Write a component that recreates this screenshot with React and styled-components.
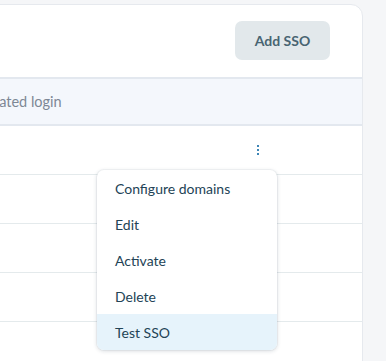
import React from "react";
import styled, { createGlobalStyle } from "styled-components";

const Global = createGlobalStyle`
  html, body {
    margin: 0;
    padding: 0;
    background: #f5f6f8;
    font-family: "Lato", "Liberation Sans", sans-serif;
    overflow: hidden;
  }
`;

const Page = styled.div`
  width: 386px;
  height: 361px;
  padding: 4px 23px 0 0;
  box-sizing: border-box;
  overflow: hidden;
`;

const Card = styled.div`
  position: relative;
  margin-left: -60px;
  height: 420px;
  background: #ffffff;
  border: 1px solid #e6e9ee;
  border-radius: 12px;
`;

const Toolbar = styled.div`
  display: flex;
  justify-content: flex-end;
  align-items: flex-start;
  height: 72px;
  padding: 16px 32px 0 0;
  box-sizing: border-box;
`;

const Button = styled.button`
  width: 95px;
  height: 39px;
  border: none;
  border-radius: 7px;
  background: #e2e8eb;
  color: #486472;
  font-family: inherit;
  font-size: 14px;
  font-weight: 700;
`;

const HeaderRow = styled.div`
  display: flex;
  align-items: center;
  height: 45px;
  background: #f4f7fc;
  border-top: 2px solid #e3e8ef;
  border-bottom: 2px solid #e3e8ef;
`;

const HeaderCell = styled.div`
  padding-left: ${(p) => p.$indent}px;
  color: #7d8795;
  font-size: 14.5px;
`;

const Row = styled.div`
  display: flex;
  align-items: center;
  justify-content: flex-end;
  height: 48px;
  border-bottom: 1px solid #e4eaec;
  padding-right: 103px;
`;

const Kebab = styled.div`
  display: flex;
  flex-direction: column;
  gap: 2px;
  & span {
    width: 2px;
    height: 2px;
    background: #3e86b6;
  }
`;

const Menu = styled.ul`
  position: absolute;
  left: 156px;
  top: 165px;
  width: 180px;
  margin: 0;
  padding: 0;
  list-style: none;
  background: #ffffff;
  border-radius: 7px;
  overflow: hidden;
  box-shadow: 0 1px 4px rgba(30, 50, 70, 0.18), 0 0 0 1px rgba(30, 50, 70, 0.04);
`;

const Item = styled.li`
  height: 36px;
  display: flex;
  align-items: center;
  padding-left: 18px;
  color: #234356;
  font-size: 14px;
  background: ${(p) => (p.$active ? "#e6f3fb" : "transparent")};
`;

const items = ["Configure domains", "Edit", "Activate", "Delete", "Test SSO"];

export default function App() {
  return (
    <Page>
      <Global />
      <Card>
        <Toolbar>
          <Button>Add SSO</Button>
        </Toolbar>
        <HeaderRow>
          <HeaderCell $indent={22}>Federated login</HeaderCell>
        </HeaderRow>
        <Row>
          <Kebab>
            <span />
            <span />
            <span />
          </Kebab>
        </Row>
        <Row />
        <Row />
        <Row />
        <Row />
        <Menu>
          {items.map((t, i) => (
            <Item key={t} $active={i === items.length - 1}>
              {t}
            </Item>
          ))}
        </Menu>
      </Card>
    </Page>
  );
}
